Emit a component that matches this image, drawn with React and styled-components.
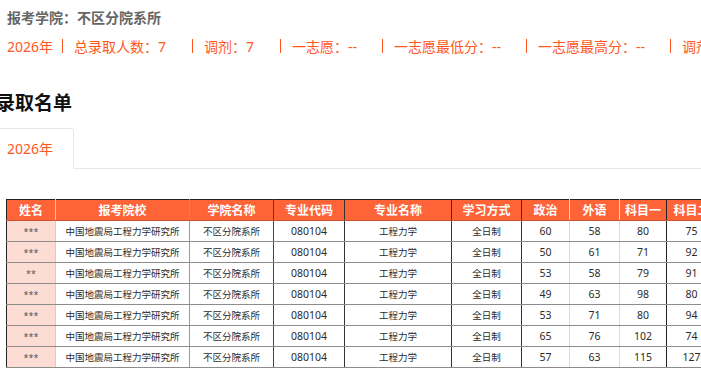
import styled, { createGlobalStyle } from 'styled-components';

const ORANGE = '#ff5722';

const GlobalStyle = createGlobalStyle`
  html, body {
    margin: 0;
    padding: 0;
    background: #fff;
    overflow: hidden;
  }
  body {
    font-family: "Noto Sans", "Noto Sans CJK SC", sans-serif;
  }
`;

const stats = [
  { label: '总录取人数：', value: '7' },
  { label: '调剂：', value: '7' },
  { label: '一志愿：', value: '--' },
  { label: '一志愿最低分：', value: '--' },
  { label: '一志愿最高分：', value: '--' },
  { label: '调剂', value: '' },
];

const columns = [
  { title: '姓名', width: 49, line: '#cfcfcf' },
  { title: '报考院校', width: 134, line: '#9a9a9a' },
  { title: '学院名称', width: 84, line: '#444' },
  { title: '专业代码', width: 71, line: '#333' },
  { title: '专业名称', width: 107, line: '#333' },
  { title: '学习方式', width: 70, line: '#333' },
  { title: '政治', width: 48, line: '#dcdcdc' },
  { title: '外语', width: 50, line: '#dcdcdc' },
  { title: '科目一', width: 47, line: '#222' },
  { title: '科目二', width: 50, line: '#333' },
];

const rows = [
  ['***', 60, 58, 80, 75],
  ['***', 50, 61, 71, 92],
  ['**', 53, 58, 79, 91],
  ['***', 49, 63, 98, 80],
  ['***', 53, 71, 80, 94],
  ['***', 65, 76, 102, 74],
  ['***', 57, 63, 115, 127],
];

const App = () => {
  return (
    <Page>
      <GlobalStyle />
      <School>报考学院：不区分院系所</School>
      <StatRow>
        <Stat>2026年</Stat>
        {stats.map((s) => (
          <Stat key={s.label}>
            <Divider />
            {s.label}
            {s.value && <Value>{s.value}</Value>}
          </Stat>
        ))}
      </StatRow>

      <Heading>录取名单</Heading>

      <TabBar>
        <Tab>2026年</Tab>
      </TabBar>

      <Table>
        <colgroup>
          {columns.map((c) => (
            <col key={c.title} style={{ width: c.width }} />
          ))}
        </colgroup>
        <thead>
          <tr>
            {columns.map((c) => (
              <Th key={c.title} $line={c.line}>{c.title}</Th>
            ))}
          </tr>
        </thead>
        <tbody>
          {rows.map((r, i) => (
            <tr key={i}>
              <NameCell $line={columns[0].line}>{r[0]}</NameCell>
              <Td $line={columns[1].line}>中国地震局工程力学研究所</Td>
              <Td $line={columns[2].line}>不区分院系所</Td>
              <Td $line={columns[3].line} $num>080104</Td>
              <Td $line={columns[4].line}>工程力学</Td>
              <Td $line={columns[5].line}>全日制</Td>
              {r.slice(1).map((v, j) => (
                <Td key={j} $line={columns[6 + j].line} $num>{v}</Td>
              ))}
            </tr>
          ))}
        </tbody>
      </Table>
    </Page>
  );
};

const Page = styled.div`
  width: 701px;
  height: 381px;
  overflow: hidden;
  padding: 8px 0 0 7px;
  box-sizing: border-box;
`;

const School = styled.div`
  font-size: 14px;
  line-height: 20px;
  font-weight: 700;
  color: #666;
`;

const StatRow = styled.div`
  display: flex;
  align-items: center;
  margin-top: 8px;
  height: 20px;
  font-size: 14px;
  color: ${ORANGE};
  white-space: nowrap;
`;

const Stat = styled.span`
  display: flex;
  align-items: center;
`;

const Divider = styled.span`
  display: inline-block;
  width: 1px;
  height: 14px;
  background: ${ORANGE};
  margin: 0 11px 0 9px;
`;

const Value = styled.span`
  display: inline-block;
  min-width: 25px;
`;

const Heading = styled.h2`
  margin: 35px 0 0 -11px;
  font-size: 19px;
  line-height: 24px;
  font-weight: 700;
  color: #111;
`;

const TabBar = styled.div`
  display: flex;
  margin: 13px 0 0 -7px;
  border-bottom: 1px solid #e4e7ed;
`;

const Tab = styled.div`
  margin: 0 0 -1px -14px;
  padding: 0 20px;
  height: 39px;
  line-height: 40px;
  font-size: 14px;
  color: ${ORANGE};
  border: 1px solid #e4e7ed;
  border-bottom-color: #fff;
  border-radius: 0 4px 0 0;
  background: #fff;
`;

const Table = styled.table`
  margin: 30px 0 0 -1px;
  border-collapse: collapse;
  table-layout: fixed;
  width: 710px;
  border: 1px solid #222;
  border-right: none;
`;

const Th = styled.th`
  height: 20px;
  padding: 0;
  background: #ff6338;
  color: #fff;
  font-size: 12px;
  font-weight: 700;
  text-align: center;
  border-right: 1px solid ${(p) => p.$line};
  border-bottom: 1px solid #c9542f;
  white-space: nowrap;
  overflow: hidden;
`;

const Td = styled.td`
  height: 20px;
  padding: 0;
  text-align: center;
  font-size: ${(p) => (p.$num ? '10.5px' : '9.5px')};
  color: #2b2b2b;
  border-right: 1px solid ${(p) => p.$line};
  border-bottom: 1px solid #8c8c8c;
  white-space: nowrap;
  overflow: hidden;
`;

const NameCell = styled(Td)`
  background: #fddcd4;
  color: #555;
  font-size: 9px;
`;

export default App;
